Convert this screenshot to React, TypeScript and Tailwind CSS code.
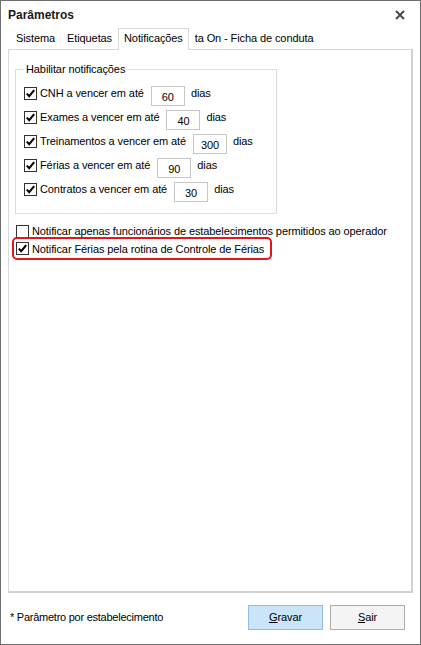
import { useState } from 'react'

const font = { fontFamily: '"Liberation Sans", Arial, sans-serif' }

interface CheckProps {
  checked: boolean
}

function CheckBox({ checked }: CheckProps) {
  return (
    <span className="w-[13px] h-[13px] shrink-0 border border-[#333333] bg-white flex items-center justify-center">
      {checked && (
        <svg width="11" height="11" viewBox="0 0 11 11">
          <path d="M1.8 5.6 L4.2 8.2 L9.2 2.2" fill="none" stroke="#000" strokeWidth="2.1" />
        </svg>
      )}
    </span>
  )
}

const rows = [
  { label: 'CNH a vencer em até', value: '60' },
  { label: 'Exames a vencer em até', value: '40' },
  { label: 'Treinamentos a vencer em até', value: '300' },
  { label: 'Férias a vencer em até', value: '90' },
  { label: 'Contratos a vencer em até', value: '30' },
]

const tabs = ['Sistema', 'Etiquetas', 'Notificações', 'ta On - Ficha de conduta']

export default function App() {
  const [active] = useState(2)

  return (
    <div
      className="w-[421px] h-[645px] bg-white border border-[#6f6f6f] flex flex-col text-[11px] tracking-[-0.1px] text-black"
      style={font}
    >
      {/* barra de titulo */}
      <div className="h-[27px] flex items-center justify-between pl-[7px] pr-[15px] shrink-0">
        <span className="text-[12px] font-bold tracking-normal text-[#1a1a1a] pt-[1px]">Parâmetros</span>
        <svg width="10" height="10" viewBox="0 0 10 10">
          <path d="M1 1 L9 9 M9 1 L1 9" stroke="#4a4a4a" strokeWidth="2" />
        </svg>
      </div>

      <div className="flex-1 flex flex-col px-[7px]">
        {/* abas */}
        <div className="h-[21px] flex items-end pl-[2px] shrink-0">
          {tabs.map((t, i) =>
            i === active ? (
              <div
                key={t}
                className="relative z-10 h-[22px] -mb-px px-[5px] border border-b-0 border-[#d9d9d9] bg-white flex items-center pb-[2px]"
              >
                {t}
              </div>
            ) : (
              <div key={t} className="h-[21px] px-[6px] flex items-center">
                {t}
              </div>
            )
          )}
        </div>

        {/* painel */}
        <div className="flex-1 border border-[#d9d9d9] border-r-2 border-b-2 border-r-[#d0d0d0] border-b-[#d0d0d0] bg-white pt-[12px]">
          <fieldset className="ml-[6px] w-[262px] border border-[#dcdcdc] pb-[11px]">
            <legend className="ml-[8px] px-[2px] text-[11px] leading-[14px]">Habilitar notificações</legend>
            <div className="flex flex-col gap-[4px] pt-[10px] pl-[8px]">
              {rows.map((r) => (
                <div key={r.label} className="flex items-start h-[20px]">
                  <div className="pt-[1px]">
                    <CheckBox checked />
                  </div>
                  <span className="ml-[3px] leading-[14px]">{r.label}</span>
                  <div className="ml-[7px] w-[34px] h-[20px] border border-[#c6c6c6] flex items-center justify-center pt-[2px]">
                    {r.value}
                  </div>
                  <span className="ml-[6px] leading-[14px]">dias</span>
                </div>
              ))}
            </div>
          </fieldset>

          <div className="ml-[3px] mt-[10px] flex flex-col items-start">
            <div className="flex items-center h-[14px] pl-[4px]">
              <CheckBox checked={false} />
              <span className="ml-[3px] leading-[14px]">
                Notificar apenas funcionários de estabelecimentos permitidos ao operador
              </span>
            </div>
            <div className="mt-[-1px] flex items-center h-[23px] w-[260px] border-2 border-[#e8141c] rounded-[5px] pl-[2px]">
              <CheckBox checked />
              <span className="ml-[3px] leading-[14px]">Notificar Férias pela rotina de Controle de Férias</span>
            </div>
          </div>
        </div>
      </div>

      {/* rodape */}
      <div className="h-[51px] shrink-0 flex items-start pl-[9px] pr-[15px] pt-[12px]">
        <span className="h-[24px] flex items-center tracking-[-0.25px] text-[11px]">* Parâmetro por estabelecimento</span>
        <div className="ml-auto flex gap-[7px]">
          <button className="w-[75px] h-[25px] border border-[#8fbde6] bg-[#cce4f7] flex items-center justify-center">
            <span>
              <span className="underline">G</span>ravar
            </span>
          </button>
          <button className="w-[75px] h-[25px] border border-[#adadad] bg-[#f4f4f4] flex items-center justify-center">
            <span>
              <span className="underline">S</span>air
            </span>
          </button>
        </div>
      </div>
    </div>
  )
}
